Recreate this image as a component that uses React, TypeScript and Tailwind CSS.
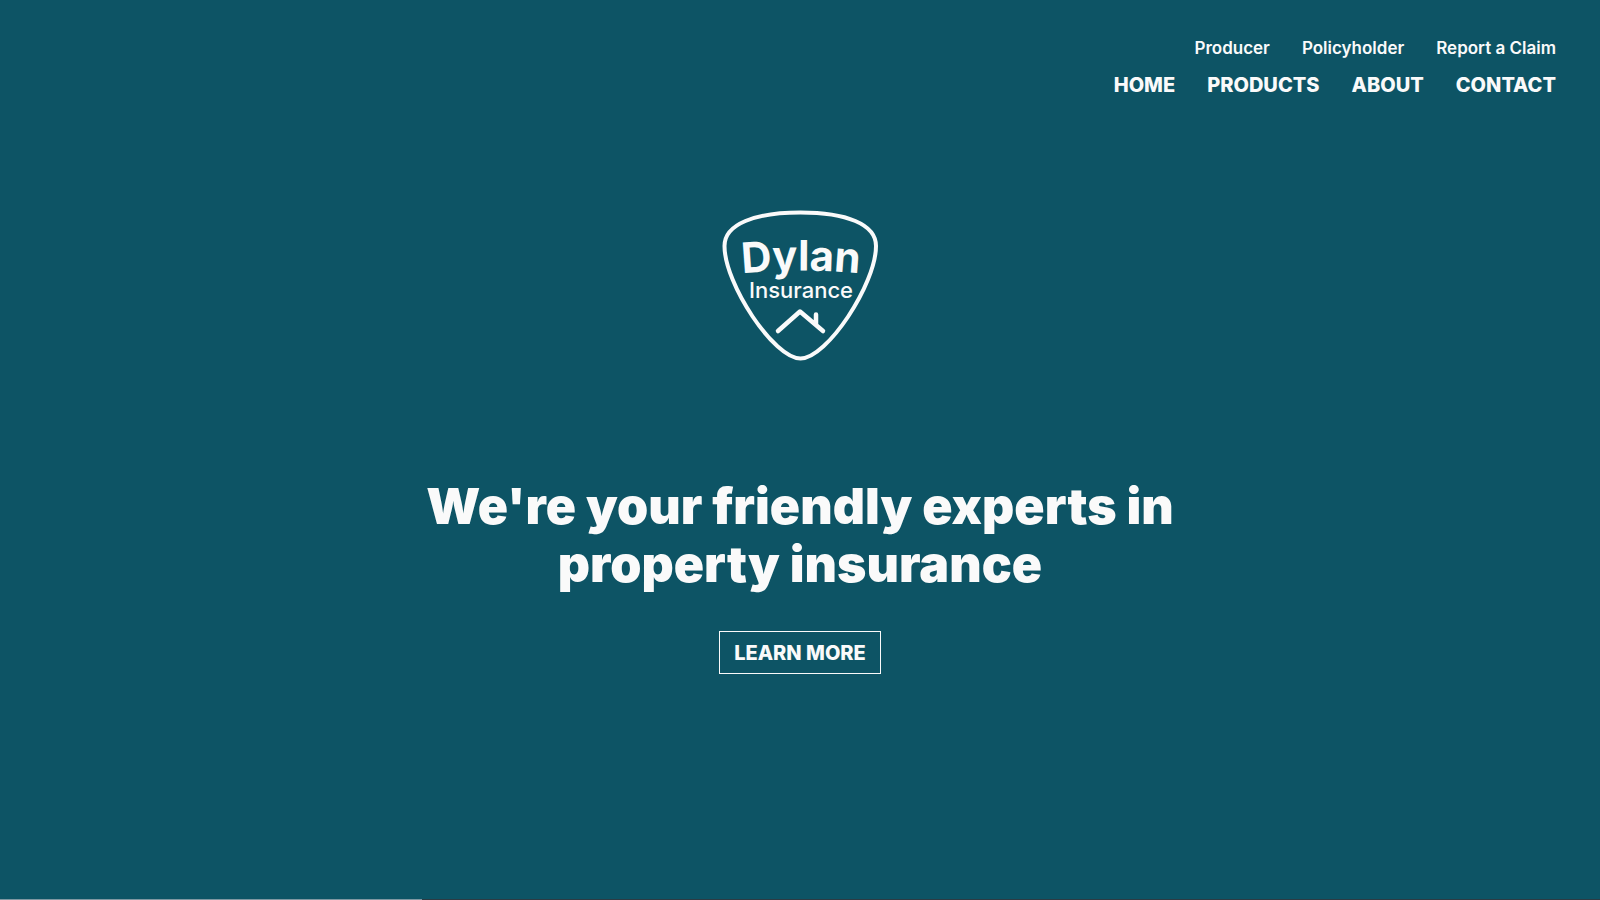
const secondaryLinks = ["Producer", "Policyholder", "Report a Claim"];
const primaryLinks = ["HOME", "PRODUCTS", "ABOUT", "CONTACT"];

function Logo() {
  return (
    <svg
      viewBox="0 0 160 156"
      className="h-[156px] w-[160px]"
      role="img"
      aria-label="Dylan Insurance"
      fill="none"
      stroke="#fafafa"
      strokeLinecap="round"
      strokeLinejoin="round"
    >
      <path
        strokeWidth="4"
        d="M80.5 4.5C126 4.5 156 16 156 38C156 76 107 150.500 80.5 150.500C54 150.500 4.500 76 4.500 38C4.500 16 35 4.500 80.500 4.500Z"
      />
      <path strokeWidth="4.500" d="M58 123L80 103.500L103 123M96 106.500V116" />
      <defs>
        <path id="name-arc" d="M16 66Q80 59 146 66" />
      </defs>
      <g fill="#fafafa" stroke="none" fontFamily="Inter, sans-serif" textAnchor="middle">
        <text fontSize="42" fontWeight="700">
          <textPath href="#name-arc" startOffset="50%">
            Dylan
          </textPath>
        </text>
        <text x="81" y="90" fontSize="22" fontWeight="500">
          Insurance
        </text>
      </g>
    </svg>
  );
}

export default function App() {
  return (
    <div className="flex min-h-screen flex-col bg-[#0d5465] font-['Inter',sans-serif] text-[#fafafa]">
      <header className="flex flex-col items-end gap-2 px-11 pt-9">
        <nav aria-label="Secondary" className="flex gap-8 text-[17px] leading-6 font-semibold">
          {secondaryLinks.map((label) => (
            <a key={label} href="#">
              {label}
            </a>
          ))}
        </nav>
        <nav aria-label="Primary" className="flex gap-8 text-xl leading-[34px] font-extrabold">
          {primaryLinks.map((label) => (
            <a key={label} href="#">
              {label}
            </a>
          ))}
        </nav>
      </header>
      <main className="flex flex-1 flex-col items-center pt-[106px]">
        <Logo />
        <h1 className="mt-[113px] max-w-[800px] text-center text-[50px] leading-[58px] font-black">
          We're your friendly experts in property insurance
        </h1>
        <button
          type="button"
          className="mt-[38px] h-[43px] border border-[#fafafa] px-[14px] text-xl font-extrabold"
        >
          LEARN MORE
        </button>
      </main>
      <div className="flex h-px">
        <div className="w-[422px] bg-[#7f98a2]" />
        <div className="flex-1 bg-[#2d3b43]" />
      </div>
    </div>
  );
}
